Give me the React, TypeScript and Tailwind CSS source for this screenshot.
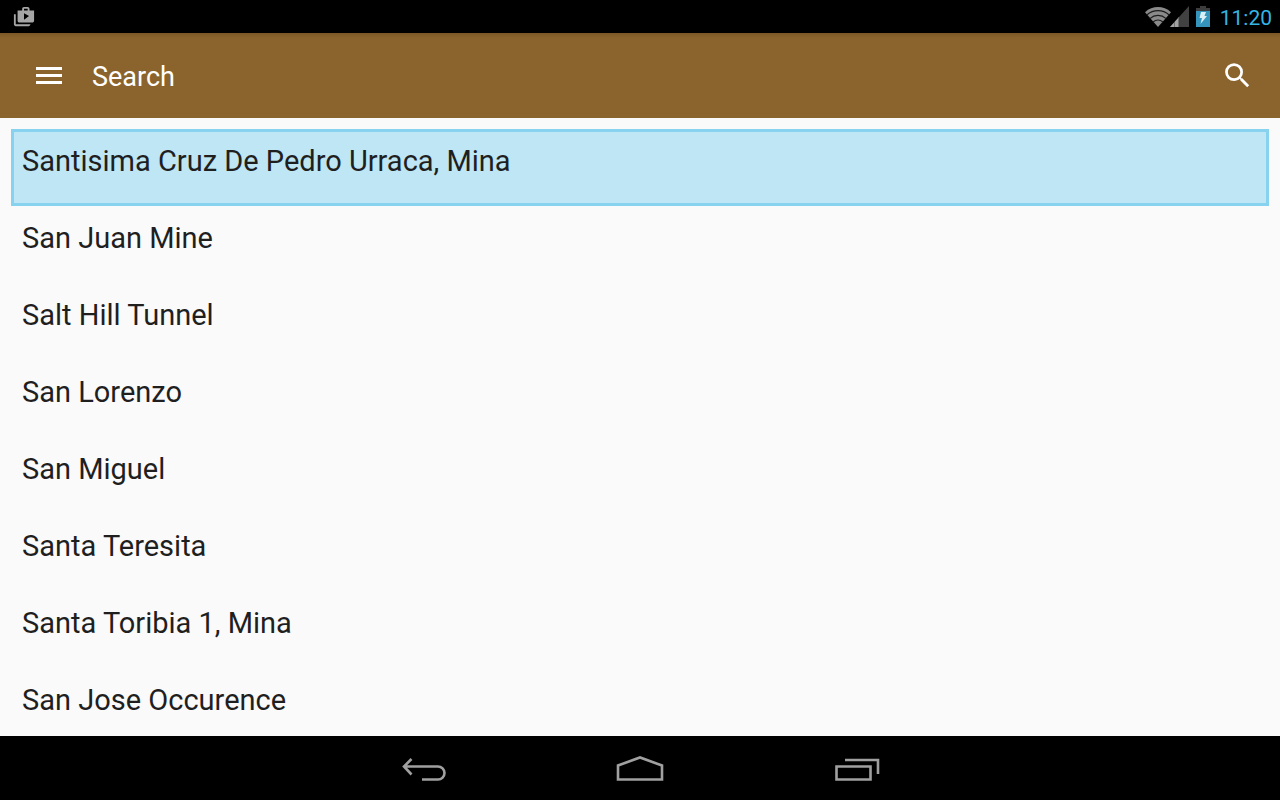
import { useState } from 'react'
import { MdSearch, MdShopTwo } from 'react-icons/md'

const mines = [
  'Santisima Cruz De Pedro Urraca, Mina',
  'San Juan Mine',
  'Salt Hill Tunnel',
  'San Lorenzo',
  'San Miguel',
  'Santa Teresita',
  'Santa Toribia 1, Mina',
  'San Jose Occurence',
]

function WifiIcon() {
  return (
    <svg width="26" height="22" viewBox="0 0 26 22" aria-hidden="true">
      <path d="M13 21 0 6.2C7.5-.6 18.5-.6 26 6.2Z" fill="#8a8a8a" />
      <g fill="none" stroke="#1c1c1c" strokeWidth="1.2">
        <path d="M1.8 9C8.5 3.2 17.5 3.2 24.2 9" />
        <path d="M4.8 12.6C9.8 8.4 16.2 8.4 21.2 12.6" />
        <path d="M8 16C11 13.6 15 13.6 18 16" />
      </g>
    </svg>
  )
}

function SignalIcon() {
  return (
    <svg width="18" height="22" viewBox="0 0 18 22" className="overflow-visible" aria-hidden="true">
      <path d="M18 0v21H-1Z" fill="#414141" />
      <path d="M8 11v10H-1Z" fill="#a3a3a3" />
      <path d="M3.5 16v5M7.5 12v9" stroke="#505050" strokeWidth="0.6" />
    </svg>
  )
}

function BatteryIcon() {
  return (
    <svg width="14" height="22" viewBox="0 0 14 22" aria-hidden="true">
      <path d="M4 0h6v2h4v3H0V2h4Z" fill="#3d3d3d" />
      <path d="M0 5h14v16H0Z" fill="#3594bb" />
      <path d="M5 6h5L8.5 10H11L4.500 18 6 12H3.500Z" fill="#d9eef5" />
    </svg>
  )
}

function StatusBar() {
  return (
    <div className="flex h-[33px] shrink-0 items-center justify-between bg-black pl-[13px] pr-2">
      <MdShopTwo size={22} color="#a6a6a6" aria-hidden="true" />
      <div className="flex items-center">
        <WifiIcon />
        <SignalIcon />
        <div className="ml-[7px] mr-[10px]">
          <BatteryIcon />
        </div>
        <time className="pt-0.5 text-[21px] leading-[30px] text-[#33b5e5]">11:20</time>
      </div>
    </div>
  )
}

function Toolbar() {
  return (
    <header className="flex h-[85px] shrink-0 items-center bg-[#8b642d] bg-[linear-gradient(#7c5826,#8b642d_5px)] pl-8 pr-[26px] text-white">
      <button aria-label="Menu">
        <svg width="34" height="35" viewBox="0 0 34 35" aria-hidden="true">
          <path d="M4 10.5h26M4 17.5h26M4 24.5h26" stroke="white" strokeWidth="2.8" />
        </svg>
      </button>
      <h1 className="ml-[26px] flex-1 pt-0.5 text-[27px] leading-8">Search</h1>
      <button aria-label="Search">
        <MdSearch size={33} />
      </button>
    </header>
  )
}

function NavBar() {
  return (
    <nav className="flex h-16 shrink-0 items-center justify-center gap-[168px] bg-black">
      <button aria-label="Back">
        <svg width="48" height="32" viewBox="0 0 48 32" fill="none" stroke="#a0a0a0" strokeWidth="2.6" aria-hidden="true">
          <path d="M11.5 7 4 14.5l7.5 8M4 14.5h34a6.500 6.500 0 0 1 0 13H22" />
        </svg>
      </button>
      <button aria-label="Home">
        <svg width="48" height="32" viewBox="0 0 48 32" fill="none" stroke="#a0a0a0" strokeWidth="2.6" aria-hidden="true">
          <path d="M2 27.5V13.5L24 5.5l22 8v14Z" />
        </svg>
      </button>
      <button aria-label="Recent apps">
        <svg width="48" height="32" viewBox="0 0 48 32" fill="none" stroke="#a0a0a0" strokeWidth="2.6" aria-hidden="true">
          <path d="M4.5 14.5h34v13h-34ZM13 8h33v14" />
        </svg>
      </button>
    </nav>
  )
}

export default function App() {
  const [selected, setSelected] = useState(0)

  return (
    <div className="flex h-screen flex-col bg-[#fafafa] font-['Roboto',sans-serif]">
      <StatusBar />
      <Toolbar />
      <ul className="min-h-0 flex-1 overflow-hidden p-[11px]">
        {mines.map((name, i) => (
          <li key={name}>
            <button
              className={`block w-full border-[3px] px-2 pb-6 pt-[11px] text-left text-[29px] leading-9 text-[#1f1f1f] ${
                i === selected
                  ? 'border-[#87d2ee] bg-[#bee6f4]'
                  : 'border-transparent'
              }`}
              onClick={() => setSelected(i)}
            >
              {name}
            </button>
          </li>
        ))}
      </ul>
      <NavBar />
    </div>
  )
}
